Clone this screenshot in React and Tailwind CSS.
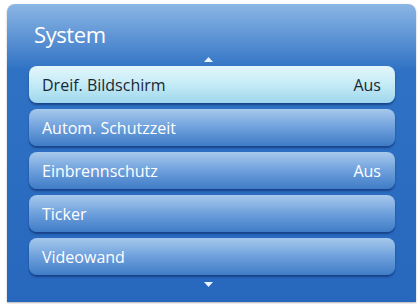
const items = [
	{ label: 'Dreif. Bildschirm', value: 'Aus', active: true },
	{ label: 'Autom. Schutzzeit' },
	{ label: 'Einbrennschutz', value: 'Aus' },
	{ label: 'Ticker' },
	{ label: 'Videowand' },
];

const MenuItem = ({ label, value, active }) => (
	<div
		className={`h-[37px] rounded-[8px] flex items-center justify-between pl-[13px] pr-[14px] text-[16px] shadow-[0_2px_2px_rgba(10,40,100,0.6)] ${
			active
				? 'bg-gradient-to-b from-[#e4f6fb] via-[#c4ebf6] to-[#9fd6ec] text-[#1b2633]'
				: 'bg-gradient-to-b from-[#a7c9ec] via-[#6ea0dc] to-[#3f7cc6] text-white'
		}`}
	>
		<span>{label}</span>
		{value && <span>{value}</span>}
	</div>
);

export default function App() {
	return (
		<div className="w-[420px] h-[304px] bg-white pt-[4px] pl-[7px] pr-[4px] pb-[2px]" style={{ fontFamily: '"Open Sans", "Noto Sans", sans-serif' }}>
			<div className="h-full rounded-t-[8px] bg-gradient-to-b from-[#8bb6e4] via-[#2f72c4] via-[22%] to-[#2767bd] flex flex-col shadow-[0_1px_2px_rgba(0,0,0,0.3)]">
				<div className="pl-[27px] pt-[15px] text-[22px] leading-[30px] text-white tracking-[-0.4px]">System</div>
				<div className="flex justify-center h-[13px] items-center mt-[4px] pr-[6px]">
					<svg width="9" height="5" viewBox="0 0 9 5">
						<polygon points="4.5,0 9,5 0,5" fill="#e8f4ff" />
					</svg>
				</div>
				<div className="flex flex-col gap-[6px] pl-[22px] pr-[21px]">
					{items.map((item) => (
						<MenuItem key={item.label} {...item} />
					))}
				</div>
				<div className="flex justify-center mt-[7px] pr-[6px]">
					<svg width="9" height="5" viewBox="0 0 9 5">
						<polygon points="0,0 9,0 4.5,5" fill="#e8f4ff" />
					</svg>
				</div>
			</div>
		</div>
	);
}
